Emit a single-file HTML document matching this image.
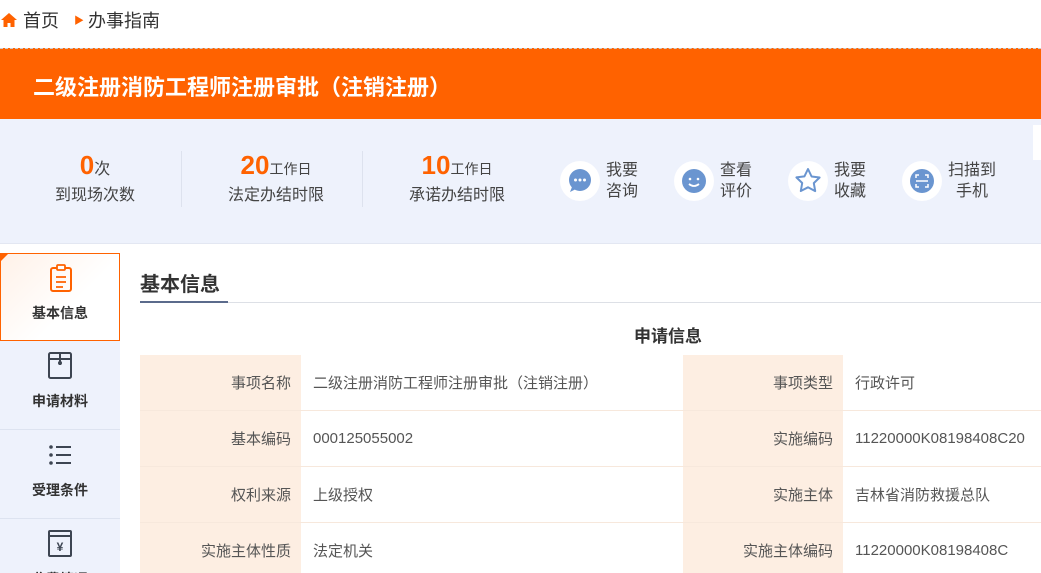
<!DOCTYPE html><html><head><meta charset="utf-8"><style>
html,body{margin:0;width:1041px;height:573px;overflow:hidden}
body{background:#fff;font-family:"Liberation Sans","Noto Sans CJK SC",sans-serif;position:relative;color:#333}
.a{position:absolute}
.bc{top:7px;left:0;font-size:18px;color:#333}
.ban{top:48px;left:0;width:1041px;height:71px;background:#ff6200;border-top:1px dashed #ccc;box-sizing:border-box}
.ban div{position:absolute;left:33px;top:21px;color:#fff;font-size:22px;font-weight:bold}
.st{top:119px;left:0;width:1041px;height:124px;background:#eef2fc;border-bottom:1px solid #e3e7f2}
.stat{position:absolute;top:31px;width:180px;text-align:center;font-size:16px;color:#444}
.stat b{color:#ff6200;font-size:26px}
.stat small{font-size:14px}
.sep{position:absolute;top:32px;width:1px;height:56px;background:#dde2ee}
.ic{position:absolute;top:42px;width:40px;height:40px;border-radius:50%;background:#fff}
.ict{position:absolute;top:41px;font-size:16px;line-height:21px;color:#444}
.sb{left:0;width:120px;background:#eef2fc}
.it{position:absolute;left:0;width:120px;height:89px;text-align:center;font-size:14px;font-weight:bold;color:#333;border-bottom:1px solid #dde3f0;box-sizing:border-box}
.it span{position:absolute;left:0;right:0;top:50px}
.it svg{position:absolute;left:47px;top:10px}
td{height:55px;border-bottom:1px solid #f7e8dc;font-size:15px;color:#555;padding:0 10px 0 12px}
.l{background:#fdeee2;text-align:right;padding-right:10px}
</style></head><body>
<div class="a bc"><svg width="18" height="16" viewBox="0 0 18 16" style="vertical-align:-1px"><path d="M9 1L1 8h2.5v7h4v-4h3v4h4V8H17z" fill="#ff6200"/></svg> 首页 <span style="color:#ff6200;font-size:10px;margin:0 4px 0 10px;vertical-align:3px">▶</span>办事指南</div>
<div class="a ban"><div>二级注册消防工程师注册审批（注销注册）</div></div>
<div class="a st">
<div class="stat" style="left:5px"><b>0</b>次<br>到现场次数</div>
<div class="sep" style="left:181px"></div>
<div class="stat" style="left:186px"><b>20</b><small>工作日</small><br>法定办结时限</div>
<div class="sep" style="left:362px"></div>
<div class="stat" style="left:367px"><b>10</b><small>工作日</small><br>承诺办结时限</div>
<div class="ic" style="left:560px"><svg width="40" height="40"><circle cx="20" cy="19" r="11" fill="#6a95d0"/><path d="M12 26l-2 5 6-3z" fill="#6a95d0"/><circle cx="15.5" cy="19" r="1.5" fill="#fff"/><circle cx="20" cy="19" r="1.5" fill="#fff"/><circle cx="24.5" cy="19" r="1.5" fill="#fff"/></svg></div>
<div class="ict" style="left:606px">我要<br>咨询</div>
<div class="ic" style="left:674px"><svg width="40" height="40"><circle cx="20" cy="20" r="12" fill="#6a95d0"/><circle cx="16" cy="18" r="1.3" fill="#fff"/><circle cx="24" cy="18" r="1.3" fill="#fff"/><path d="M15 23q5 4 10 0" stroke="#fff" stroke-width="1.8" fill="none"/></svg></div>
<div class="ict" style="left:720px">查看<br>评价</div>
<div class="ic" style="left:788px"><svg width="40" height="40"><path d="M20 8l3.6 7.5 8 1-5.8 5.6 1.4 8L20 26.3 12.8 30l1.4-8-5.8-5.6 8-1z" fill="none" stroke="#6a95d0" stroke-width="2" stroke-linejoin="round"/></svg></div>
<div class="ict" style="left:834px">我要<br>收藏</div>
<div class="ic" style="left:902px"><svg width="40" height="40"><circle cx="20" cy="20" r="12" fill="#6a95d0"/><path d="M14 17v-3h3M23 14h3v3M26 23v3h-3M17 26h-3v-3M14 20h12" stroke="#fff" stroke-width="1.5" fill="none"/></svg></div>
<div class="ict" style="left:948px">扫描到<br><span style="margin-left:8px">手机</span></div>
<div style="position:absolute;left:1033px;top:6px;width:8px;height:35px;background:#fff"></div>
</div>
<div class="a sb" style="top:253px;height:320px">
<div class="it" style="top:0;height:88px;background:linear-gradient(135deg,#fff1e8,#fff 60%);border:1px solid #ff6200;color:#333"><div style="position:absolute;left:0;top:0;border-top:7px solid #ff6200;border-right:7px solid transparent"></div><svg width="26" height="30"><rect x="3" y="4" width="20" height="23" rx="2" fill="none" stroke="#ff6200" stroke-width="2"/><rect x="9" y="1" width="8" height="5" rx="1" fill="#fff" stroke="#ff6200" stroke-width="1.8"/><path d="M8 13h10M8 18h10M8 23h7" stroke="#ff6200" stroke-width="1.8"/></svg><span style="top:49px">基本信息</span></div>
<div class="it" style="top:88px"><svg width="26" height="30"><rect x="2" y="2" width="22" height="25" rx="1.5" fill="none" stroke="#3d4552" stroke-width="2"/><path d="M2 8h22M13 2v12" stroke="#3d4552" stroke-width="2"/><circle cx="13" cy="12" r="2" fill="#3d4552"/></svg><span>申请材料</span></div>
<div class="it" style="top:177px"><svg width="26" height="30"><g fill="#3d4552"><circle cx="4" cy="7" r="1.8"/><circle cx="4" cy="15" r="1.8"/><circle cx="4" cy="23" r="1.8"/></g><path d="M9 7h15M9 15h15M9 23h15" stroke="#3d4552" stroke-width="2"/></svg><span>受理条件</span></div>
<div class="it" style="top:266px"><svg width="26" height="30"><rect x="2" y="2" width="22" height="25" rx="1" fill="none" stroke="#3d4552" stroke-width="2"/><path d="M2 7h22" stroke="#3d4552" stroke-width="2"/><text x="13" y="22" font-size="12" text-anchor="middle" fill="#3d4552" font-weight="bold">¥</text></svg><span>收费情况</span></div>
</div>
<div class="a" style="left:140px;top:268px;font-size:20px;font-weight:bold;color:#333">基本信息</div>
<div class="a" style="left:140px;top:302px;width:901px;height:1px;background:#dde0e6"></div>
<div class="a" style="left:140px;top:301px;width:88px;height:2px;background:#5b6b8c"></div>
<div class="a" style="left:634px;top:322px;font-size:17px;font-weight:bold;color:#333">申请信息</div>
<table class="a" style="left:140px;top:355px;width:920px;border-collapse:collapse">
<tr><td class="l" style="width:139px">事项名称</td><td style="width:360px">二级注册消防工程师注册审批（注销注册）</td><td class="l" style="width:138px">事项类型</td><td>行政许可</td></tr>
<tr><td class="l">基本编码</td><td>000125055002</td><td class="l">实施编码</td><td>11220000K08198408C20</td></tr>
<tr><td class="l">权利来源</td><td>上级授权</td><td class="l">实施主体</td><td>吉林省消防救援总队</td></tr>
<tr><td class="l">实施主体性质</td><td>法定机关</td><td class="l">实施主体编码</td><td>11220000K08198408C</td></tr>
</table>
</body></html>
